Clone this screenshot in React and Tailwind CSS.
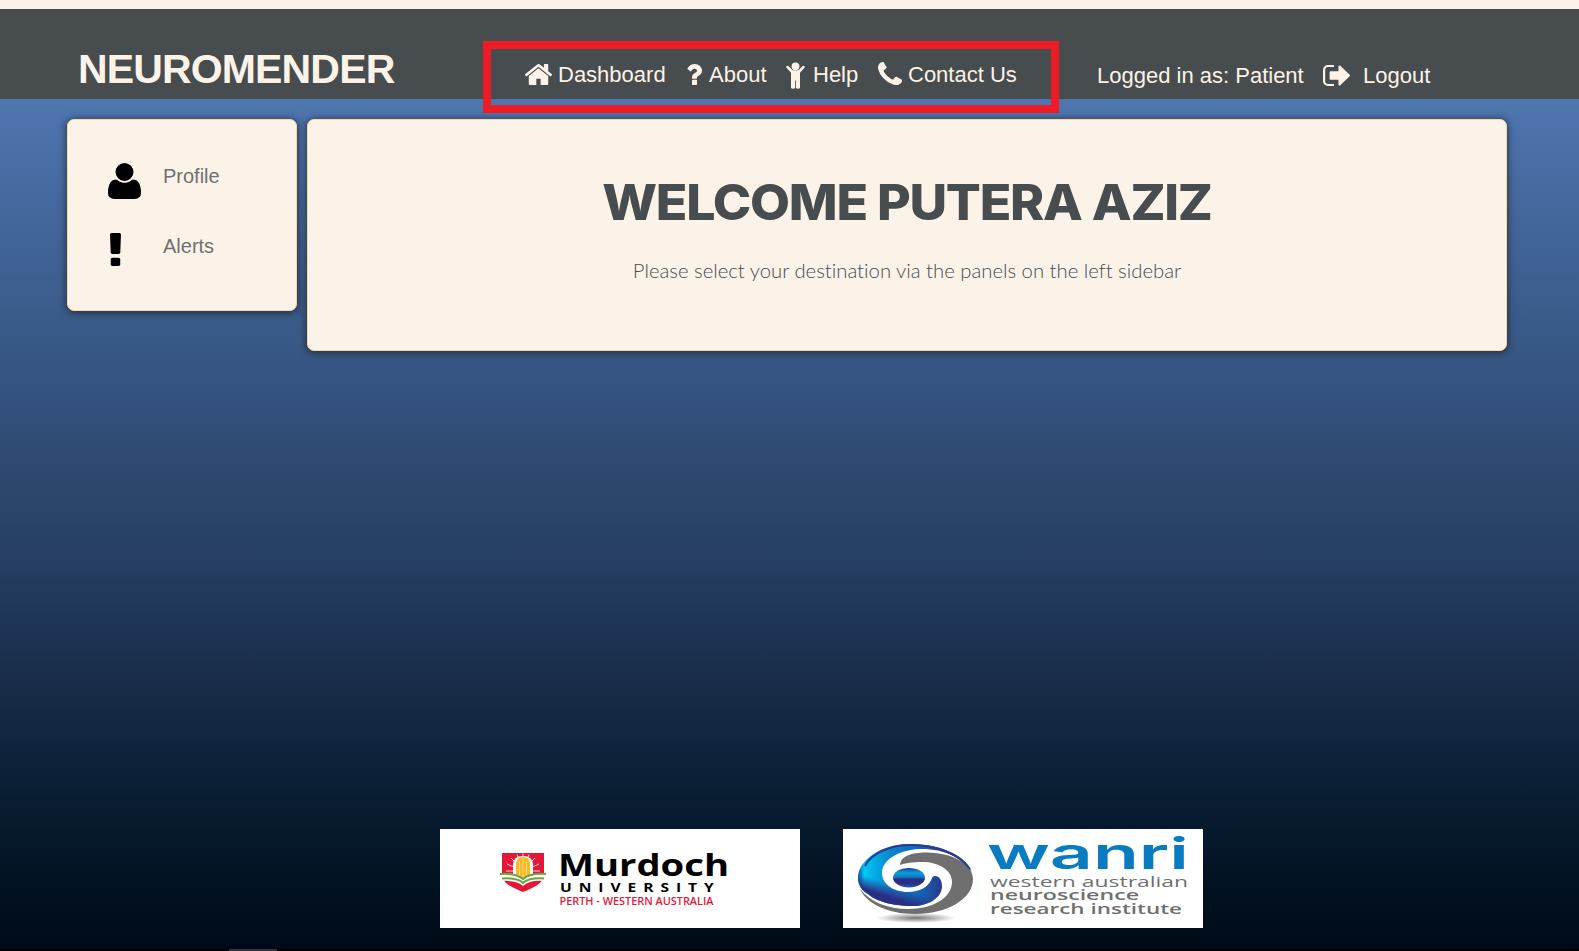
function Icon({ box, d, className }) {
  return (
    <svg viewBox={box} preserveAspectRatio="none" className={className} fill="currentColor" aria-hidden="true">
      <path d={d} />
    </svg>
  );
}

const HOME = "M1472 992v480q0 26-19 45t-45 19h-384v-384h-256v384h-384q-26 0-45-19t-19-45v-480q0-1 .5-3t.5-3l575-474 575 474q1 2 1 6zm223-69l-62 74q-8 9-21 11h-3q-13 0-21-7l-692-577-692 577q-12 8-24 7-13-2-21-11l-62-74q-8-10-7-23.5t11-21.5l719-599q32-26 76-26t76 26l244 204v-195q0-14 9-23t23-9h192q14 0 23 9t9 23v408l219 182q10 8 11 21.5t-7 23.5z";
const QUESTION = "M1088 1256v240q0 16-12 28t-28 12h-240q-16 0-28-12t-12-28v-240q0-16 12-28t28-12h240q16 0 28 12t12 28zm316-600q0 54-15.5 101t-35 76.5-55 59.5-57.5 43.5-61 35.5q-41 23-68.5 65t-27.5 67q0 17-12 32.5t-28 15.5h-240q-15 0-25.5-18.5t-10.5-37.5v-45q0-83 65-156.5t143-108.5q59-27 84-56t25-76q0-42-46.5-74t-107.5-32q-65 0-108 29-35 25-107 115-13 16-31 16-12 0-25-8l-164-125q-13-10-15.5-25t5.5-28q160-266 464-266 80 0 161 31t146 83 106 127.5 41 158.5z";
const PHONE = "M1600 1240q0 27-10 70.5t-21 68.5q-21 50-122 106-94 51-186 51-27 0-53-3.5t-57.5-12.5-47-14.5-55.5-20.5-49-18q-98-35-175-83-127-79-264-216t-216-264q-48-77-83-175-3-9-18-49t-20.5-55.5-14.5-47-12.5-57.5-3.500-53q0-92 51-186 56-101 106-122 25-11 68.5-21t70.5-10q14 0 21 3 18 6 53 76 11 19 30 54t35 63.5 31 53.5q3 4 17.5 25t21.5 35.5 7 28.5q0 20-28.5 50t-62 55-62 53-28.5 46q0 9 5 22.5t8.5 20.5 14 24 11.5 19q76 137 174 235t235 174q2 1 19 11.5t24 14 20.5 8.5 22.5 5q18 0 46-28.5t53-62 55-62 50-28.5q14 0 28.5 7t35.5 21.5 25 17.5q25 15 53.5 31t63.5 35 54 30q70 35 76 53 3 7 3 21z";
const SIGN_OUT = "M704 1440q0 4 1 20t.5 26.5-3 23.5-10 19.5-20.5 6.5h-320q-119 0-203.5-84.5t-84.5-203.5v-704q0-119 84.5-203.5t203.5-84.5h320q13 0 22.5 9.5t9.5 22.5q0 4 1 20t.5 26.5-3 23.5-10 19.5-20.5 6.5h-320q-66 0-113 47t-47 113v704q0 66 47 113t113 47h312l11.5 1 11.5 3 8 5.5 7 9 2 13.5zm928-544q0 26-19 45l-544 544q-19 19-45 19t-45-19-19-45v-288h-448q-26 0-45-19t-19-45v-384q0-26 19-45t45-19h448v-288q0-26 19-45t45-19 45 19l544 544q19 19 19 45z";
const USER = "M1600 1405q0 120-73 189.5t-194 69.5h-874q-121 0-194-69.5t-73-189.5q0-53 3.5-103.5t14-109 26.5-108.5 43-97.5 62-81 85.5-53.5 111.5-20q9 0 42 21.5t74.5 48 108 48 133.5 21.5 133.5-21.5 108-48 74.5-48 42-21.5q61 0 111.5 20t85.5 53.5 62 81 43 97.5 26.5 108.5 14 109 3.5 103.5zm-320-893q0 159-112.5 271.5t-271.5 112.5-271.5-112.5-112.5-271.5 112.5-271.5 271.5-112.5 271.5 112.5 112.5 271.5z";
const EXCLAMATION = "M1088 1248v224q0 26-19 45t-45 19h-256q-26 0-45-19t-19-45v-224q0-26 19-45t45-19h256q26 0 45 19t19 45zm30-1056l-28 768q-1 26-20.5 45t-45.5 19h-256q-26 0-45.5-19t-20.5-45l-28-768q-1-26 17.500-45t44.500-19h320q26 0 44.500 19t17.500 45z";

function ChildIcon({ className }) {
  return (
    <svg viewBox="0 0 19 27" className={className} fill="currentColor" aria-hidden="true">
      <circle cx="9.500" cy="4.300" r="3.900" />
      <path d="M.4 4.300Q1.500 3.200 2.600 4.200L6.700 8.200H12.300L16.400 4.200Q17.500 3.200 18.600 4.300Q19 5.200 18.300 6L14 10.700V25.800Q13.600 26.800 12 26.800Q10.200 26.800 9.900 25.800V18.500H9.100V25.800Q8.800 26.800 7 26.800Q5.400 26.800 5 25.800V10.700L.7 6Q0 5.200 .4 4.300Z" />
    </svg>
  );
}

function Header() {
  return (
    <header className="flex h-[90px] shrink-0 items-start bg-[#474c4e] pl-[78px] text-[22px] leading-[26px] whitespace-nowrap text-[#fcf3e8]">
      <h1 className="mt-9 w-[405px] text-[41px] leading-[48px] font-bold tracking-[-0.85px]">NEUROMENDER</h1>
      <nav className="relative z-10 mt-8 flex h-[72px] w-[576px] shrink-0 items-start border-8 border-[#ee1c24] pt-[13px] pl-[34px]">
        <a className="flex w-[161px]">
          <Icon box="96 253 1600 1283" d={HOME} className="mt-[2px] mr-[6px] h-[21px] w-[27px]" />
          Dashboard
        </a>
        <a className="flex w-[100px]">
          <Icon box="387 256 1017 1280" d={QUESTION} className="mt-[2px] mr-[7px] h-[21px] w-4" />
          About
        </a>
        <a className="flex w-[92px]">
          <ChildIcon className="mr-[8px] h-[27px] w-[19px]" />
          Help
        </a>
        <a className="flex">
          <Icon box="192 128 1408 1408" d={PHONE} className="mr-[6px] h-[23px] w-6" />
          Contact Us
        </a>
      </nav>
      <div className="mt-[54px] ml-[38px] flex">
        <span className="w-[226px]">Logged in as: Patient</span>
        <Icon box="64 256 1568 1280" d={SIGN_OUT} className="mt-[2px] mr-[13px] h-[21px] w-[27px]" />
        <span>Logout</span>
      </div>
    </header>
  );
}

function MurdochLogo() {
  return (
    <svg viewBox="0 0 360 99" className="h-[99px] w-[360px] bg-white">
      <path d="M62 24h42v21c0 9-9 13-21 18-12-5-21-9-21-18z" fill="#e31837" />
      <path d="M83 24.500v8M77 25.500l2 6M89 25.500l-2 6M71 29l5 5M95 29l-5 5M67 35l7 3M99 35l-7 3M66 42h7M100 42h-7" stroke="#f9c9cf" strokeWidth="1" />
      <path d="M73 49V36q0-9 10-9t10 9v13l-10 4z" fill="#fff" />
      <path d="M76 47V34q1-6 7-6t7 6v13l-7 4z" fill="#fdb924" />
      <path d="M79.500 32v16M83 30v20M86.500 32v16" stroke="#fff0c8" strokeWidth="0.600" />
      <path d="M60 44q16-1 23 6 7-7 23-6l-2 8q-15-1-21 5-6-6-21-5z" fill="#fff" />
      <path d="M60 45q16-1 23 5 7-6 23-5M62 49.500q15-1 21 4.500 6-5.500 21-4.500" stroke="#6aa343" strokeWidth="2" fill="none" />
      <g fontFamily="'Open Sans', sans-serif">
        <text x="118" y="46.500" fontSize="31" fontWeight="700" textLength="171" lengthAdjust="spacingAndGlyphs">Murdoch</text>
        <g transform="translate(120 62.500) scale(1.250 1)">
          <text fontSize="12.500" fontWeight="700" textLength="123" lengthAdjust="spacing">UNIVERSITY</text>
        </g>
        <text x="119.500" y="76" fontSize="9.800" fontWeight="600" fill="#e31837" textLength="154" lengthAdjust="spacingAndGlyphs">PERTH - WESTERN AUSTRALIA</text>
      </g>
    </svg>
  );
}

function WanriLogo() {
  return (
    <svg viewBox="0 0 360 99" className="h-[99px] w-[360px] bg-white">
      <defs>
        <linearGradient id="swirl" gradientUnits="userSpaceOnUse" x1="15" y1="40" x2="120" y2="40">
          <stop offset="0" stopColor="#0b57b0" />
          <stop offset="0.060" stopColor="#00c8f5" />
          <stop offset="0.300" stopColor="#0a86d0" />
          <stop offset="0.600" stopColor="#1663b4" />
          <stop offset="0.850" stopColor="#2b2e83" />
        </linearGradient>
        <linearGradient id="depth" gradientUnits="userSpaceOnUse" x1="50" y1="56" x2="46" y2="68">
          <stop offset="0" stopColor="#2b2e83" stopOpacity="0" />
          <stop offset="1" stopColor="#2b2e83" />
        </linearGradient>
        <linearGradient id="pupil" x1="0" y1="0" x2="0" y2="1">
          <stop offset="0" stopColor="#1e3f93" />
          <stop offset="0.250" stopColor="#0b9fdb" />
          <stop offset="0.500" stopColor="#0d74bd" />
          <stop offset="0.560" stopColor="#2b2e83" />
          <stop offset="0.800" stopColor="#2b2e83" />
          <stop offset="1" stopColor="#1263b4" />
        </linearGradient>
        <radialGradient id="shade">
          <stop offset="0" stopColor="#777" />
          <stop offset="1" stopColor="#fff" />
        </radialGradient>
        <path id="crescent" d="M129 43C121 24 94 15 67 15C38 15 15 31 15 49C15 56 19 62 25 65C32 72 50 77 69 77C86 77 99 69 99 57C99 47 91 45 89 49C86 58 76 63 65 63C49 63 39 54 39 44C39 30 57 21 76 20C99 19 119 28 129 43Z" />
      </defs>
      <ellipse cx="73" cy="89" rx="40" ry="5" fill="url(#shade)" />
      <path d="M57 36C57 30 63 25 75 24C103 21 130 33 130 50C130 70 104 85 72 85C44 85 23 74 17 60C27 73 45 80 65 80C91 80 109 68 109 53C109 41 96 33 79 33C70 33 62 34 57 36Z" fill="#706f6f" />
      <use href="#crescent" fill="url(#swirl)" />
      <use href="#crescent" fill="url(#depth)" />
      <path d="M22 37C29 23 49 16 68 16C94 16 116 25 127 40" fill="none" stroke="#2b3a91" strokeWidth="2" />
      <ellipse cx="66" cy="48.700" rx="16" ry="9.700" fill="url(#pupil)" />
      <g fontFamily="'Open Sans', sans-serif" fill="#706f6f">
        <text x="144" y="40" fontFamily="Inter, sans-serif" fontSize="43" fontWeight="600" fill="#087bc1" textLength="202" lengthAdjust="spacingAndGlyphs">wanri</text>
        <text x="147" y="57.500" fontSize="14" fontWeight="400" textLength="198" lengthAdjust="spacingAndGlyphs">western australian</text>
        <text x="147" y="71" fontSize="14" fontWeight="600" textLength="149" lengthAdjust="spacingAndGlyphs">neuroscience</text>
        <text x="147" y="84.500" fontSize="14" fontWeight="600" textLength="192" lengthAdjust="spacingAndGlyphs">research institute</text>
      </g>
    </svg>
  );
}

const card = "rounded-[7px] border border-[#f9d8a8] bg-[#fcf3e8] shadow-[0_1px_7px_1px_rgba(30,30,30,0.7)]";

export default function App() {
  return (
    <div className="flex h-[951px] w-[1579px] flex-col overflow-hidden border-t-[9px] border-[#fcf3e8] bg-black font-['Liberation_Sans',sans-serif]">
      <Header />
      <div className="flex h-[850px] shrink-0 flex-col bg-linear-to-b from-[#4e76b0] via-[#263f63] via-54% to-[#000a17]">
        <main className="flex items-start gap-[10px] pt-5 pl-[67px]">
          <aside className={`${card} flex h-[192px] w-[230px] flex-col pt-[43px] pl-10 text-[20px] leading-[26px] text-[#707070]`}>
            <a className="flex h-[70px] items-start">
              <span className="w-[55px] text-black"><Icon box="192 128 1408 1536" d={USER} className="h-9 w-[33px]" /></span>
              Profile
            </a>
            <a className="flex items-start">
              <span className="w-[55px] pl-[2px] text-black"><Icon box="673 128 446 1408" d={EXCLAMATION} className="h-[33px] w-[11px]" /></span>
              Alerts
            </a>
          </aside>
          <section className={`${card} h-[232px] w-[1200px] pt-[54px] text-center text-[#474c4e]`}>
            <h2 className="scale-x-[1.058] font-[Inter] text-[49px] leading-[58px] font-extrabold tracking-[-1.2px]">WELCOME PUTERA AZIZ</h2>
            <p className="mt-[25px] font-[Lato] text-[20.3px] leading-[26px] font-light [font-variant-ligatures:none]">Please select your destination via the panels on the left sidebar</p>
          </section>
        </main>
        <footer className="mt-auto flex gap-[43px] pb-[21px] pl-[440px]">
          <MurdochLogo />
          <WanriLogo />
        </footer>
      </div>
      <div className="ml-[229px] h-[2px] w-12 shrink-0 self-start bg-[#333]" />
    </div>
  );
}
